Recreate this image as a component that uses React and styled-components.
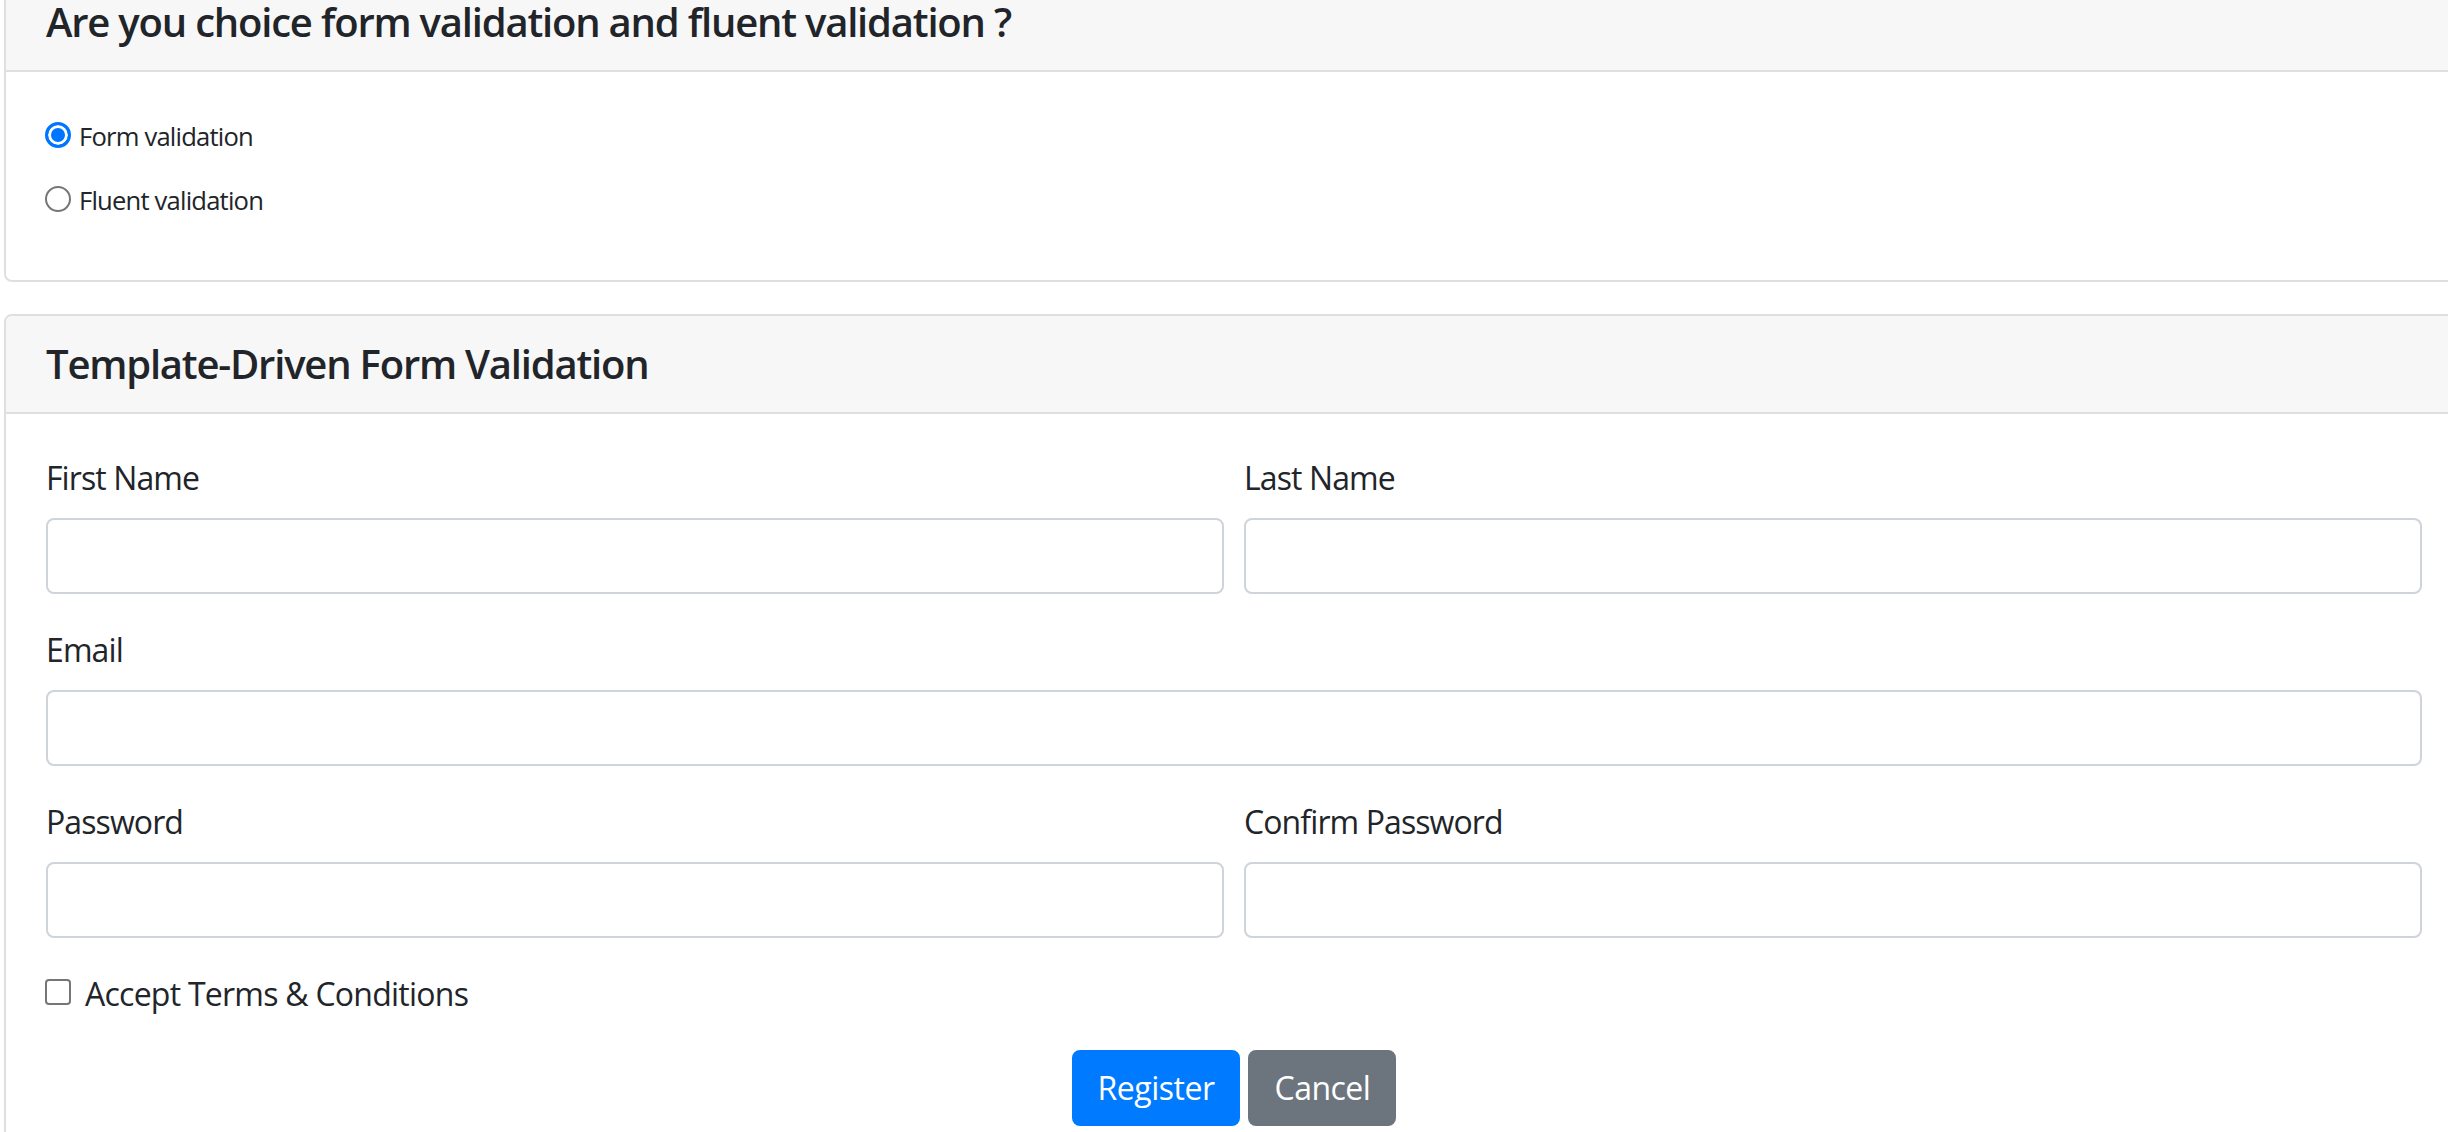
import styled, { createGlobalStyle } from "styled-components";

const GlobalStyle = createGlobalStyle`
  html, body {
    margin: 0;
    padding: 0;
    background: #fff;
    overflow: hidden;
  }
  body {
    font-family: "Open Sans", "Noto Sans", sans-serif;
    color: #212529;
  }
  * {
    box-sizing: border-box;
  }
`;

// page is scrolled a little, so the first card starts above the top edge
const Page = styled.div`
  margin-top: -28px;
  padding-left: 4px;
  width: 2464px;
  display: flex;
  flex-direction: column;
  gap: 32px;
`;

const Card = styled.div`
  border: 2px solid #dfdfdf;
  border-radius: 8px;
  background: #fff;
  overflow: hidden;
`;

const CardHeader = styled.div`
  background: #f7f7f7;
  border-bottom: 2px solid #dfdfdf;
  padding: 24px 40px;
`;

const Title = styled.h5`
  margin: 0;
  font-size: 40px;
  line-height: 48px;
  font-weight: 600;
  letter-spacing: -1.2px;
`;

const CardBody = styled.div`
  padding: 40px;
`;

const RadioRow = styled.div`
  height: 64px;
  display: flex;
  align-items: flex-start;
  gap: 8px;
`;

const Radio = styled.input.attrs({ type: "radio" })`
  appearance: none;
  margin: 10px 0 0 -1px;
  width: 26px;
  height: 26px;
  border-radius: 50%;
  border: 2px solid #767676;
  background: #fff;
  flex-shrink: 0;

  &:checked {
    border: 3px solid #0075ff;
    background: #0075ff;
    box-shadow: inset 0 0 0 3px #fff;
  }
`;

const RadioLabel = styled.label`
  font-size: 25.6px;
  line-height: 38px;
  margin-top: 6px;
  letter-spacing: -0.8px;
`;

const FormRow = styled.div`
  display: grid;
  grid-template-columns: 1fr 1fr;
  gap: 20px;
`;

const FormGroup = styled.div`
  margin-bottom: 32px;
`;

const Label = styled.label`
  display: block;
  font-size: 32px;
  line-height: 48px;
  margin-bottom: 16px;
  letter-spacing: -0.9px;
`;

const Input = styled.input`
  display: block;
  width: 100%;
  height: 76px;
  padding: 12px 24px;
  font-size: 32px;
  font-family: inherit;
  border: 2px solid #ced4da;
  border-radius: 8px;
  background: #fff;
  outline: none;
`;

const CheckRow = styled.div`
  display: flex;
  align-items: flex-start;
  margin-bottom: 32px;
`;

const Checkbox = styled.input.attrs({ type: "checkbox" })`
  appearance: none;
  margin: 9px 14px 0 -1px;
  width: 26px;
  height: 26px;
  border: 2px solid #767676;
  border-radius: 4px;
  background: #fff;
  flex-shrink: 0;
`;

const CheckLabel = styled.label`
  font-size: 32px;
  line-height: 48px;
  letter-spacing: -0.75px;
`;

const Actions = styled.div`
  display: flex;
  justify-content: center;
  gap: 8px;
`;

const Button = styled.button`
  font-family: inherit;
  font-size: 32px;
  line-height: 48px;
  padding: 12px 24px;
  border: 2px solid ${(p) => (p.$variant === "secondary" ? "#6c757d" : "#007bff")};
  border-radius: 8px;
  color: #fff;
  background: ${(p) => (p.$variant === "secondary" ? "#6c757d" : "#007bff")};
  letter-spacing: -0.5px;
`;

function Field({ id, label, type = "text" }) {
  return (
    <FormGroup>
      <Label htmlFor={id}>{label}</Label>
      <Input id={id} type={type} />
    </FormGroup>
  );
}

export default function App() {
  return (
    <>
      <GlobalStyle />
      <Page>
        <Card>
          <CardHeader>
            <Title>Are you choice form validation and fluent validation ?</Title>
          </CardHeader>
          <CardBody>
            <RadioRow>
              <Radio id="form" name="mode" defaultChecked />
              <RadioLabel htmlFor="form">Form validation</RadioLabel>
            </RadioRow>
            <RadioRow>
              <Radio id="fluent" name="mode" />
              <RadioLabel htmlFor="fluent">Fluent validation</RadioLabel>
            </RadioRow>
          </CardBody>
        </Card>

        <Card>
          <CardHeader>
            <Title>Template-Driven Form Validation</Title>
          </CardHeader>
          <CardBody>
            <FormRow>
              <Field id="firstName" label="First Name" />
              <Field id="lastName" label="Last Name" />
            </FormRow>
            <Field id="email" label="Email" type="email" />
            <FormRow>
              <Field id="password" label="Password" type="password" />
              <Field id="confirm" label="Confirm Password" type="password" />
            </FormRow>
            <CheckRow>
              <Checkbox id="terms" />
              <CheckLabel htmlFor="terms">Accept Terms &amp; Conditions</CheckLabel>
            </CheckRow>
            <Actions>
              <Button type="submit">Register</Button>
              <Button type="button" $variant="secondary">
                Cancel
              </Button>
            </Actions>
          </CardBody>
        </Card>
      </Page>
    </>
  );
}
